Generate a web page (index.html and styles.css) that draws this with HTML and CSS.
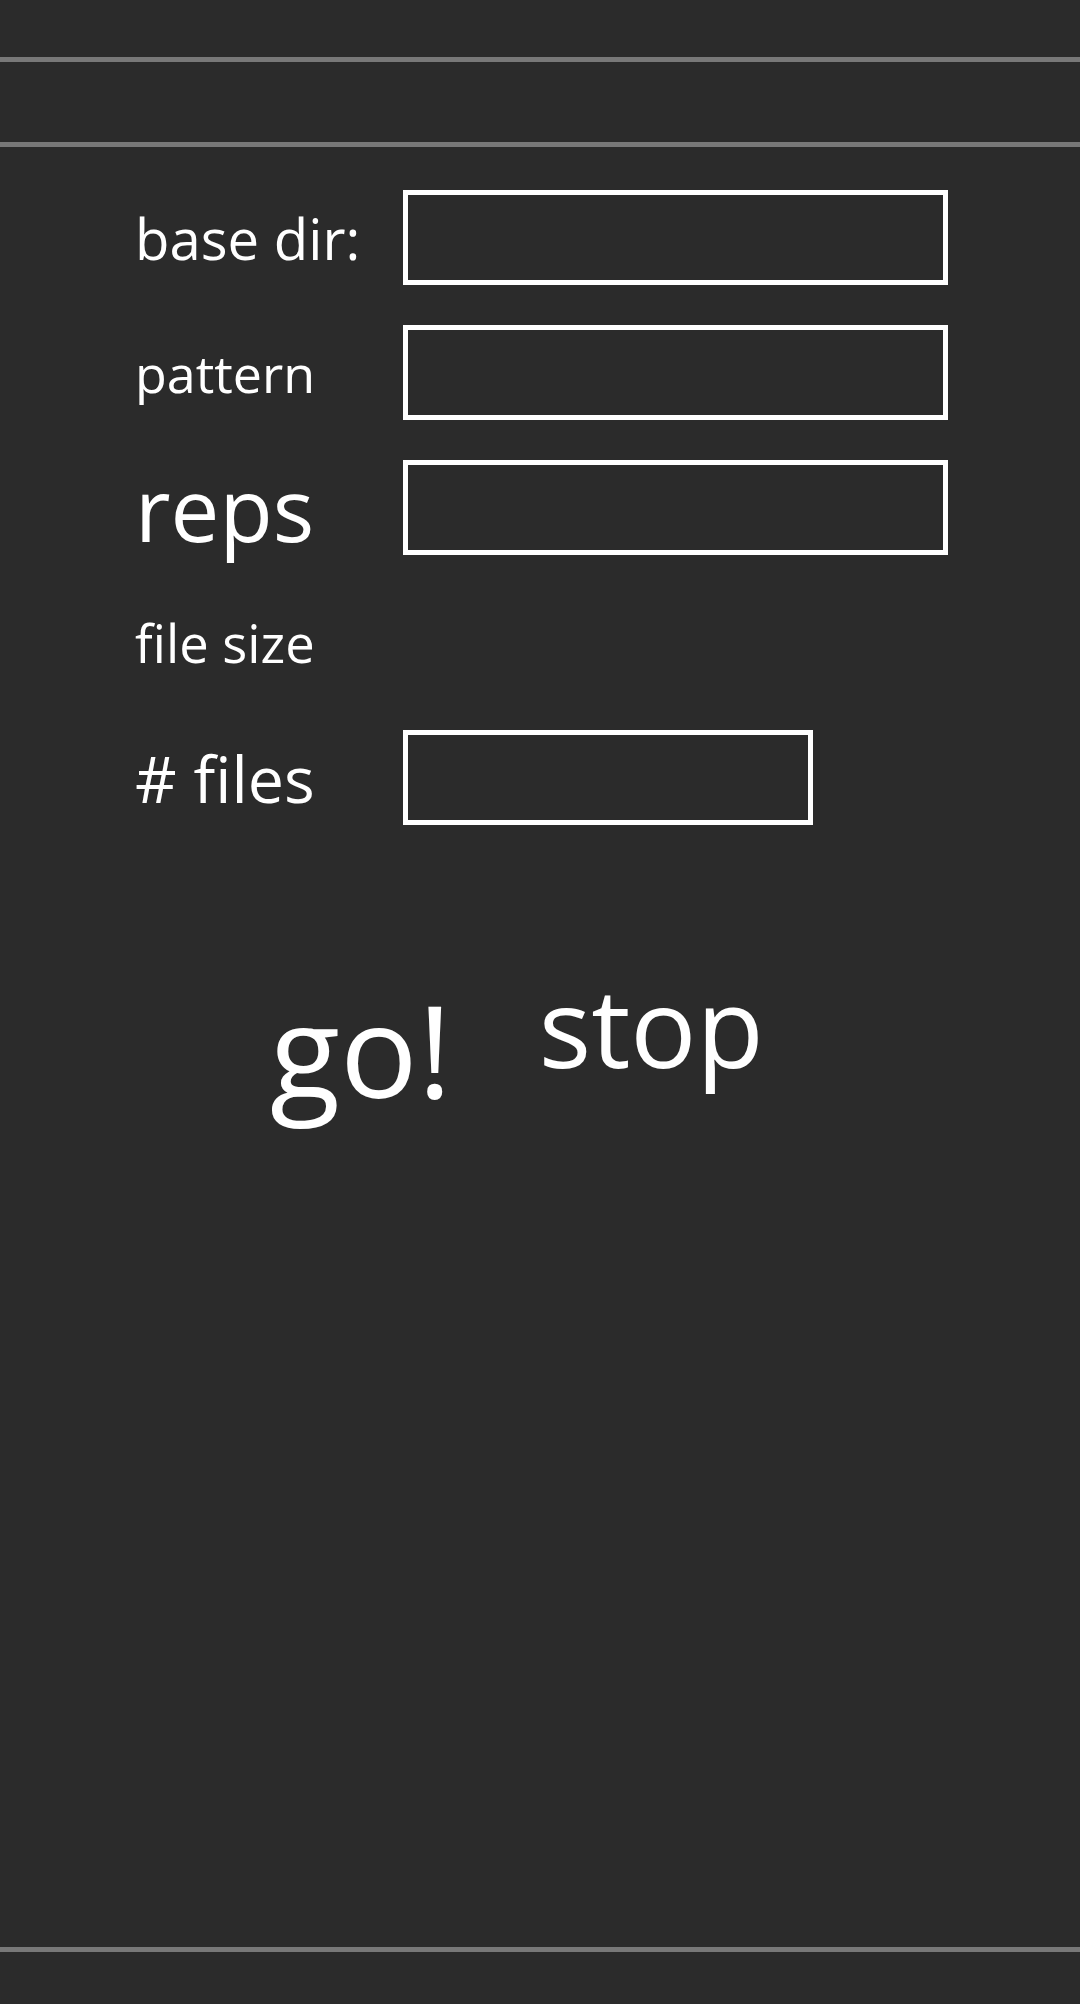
FILE: index.html
```html
<!DOCTYPE html>
<html>
<head>
<meta charset="utf-8">
<link rel="stylesheet" href="styles.css">
</head>
<body>
<div class="app">
  <div class="statusbar"></div>
  <div class="rule"></div>
  <div class="toolbar"></div>
  <div class="rule"></div>
  <main class="content">
    <div class="form">
      <div class="row">
        <label class="lbl lbl-base">base dir:</label>
        <input class="field field-wide" type="text">
      </div>
      <div class="row">
        <label class="lbl lbl-pattern">pattern</label>
        <input class="field field-wide" type="text">
      </div>
      <div class="row">
        <label class="lbl lbl-reps">reps</label>
        <input class="field field-wide" type="text">
      </div>
      <div class="row">
        <label class="lbl lbl-size">file size</label>
      </div>
      <div class="row">
        <label class="lbl lbl-files"># files</label>
        <input class="field field-narrow" type="text">
      </div>
    </div>
    <div class="actions">
      <button class="btn btn-go">go!</button>
      <button class="btn btn-stop">stop</button>
    </div>
  </main>
  <div class="rule"></div>
  <div class="navbar"></div>
</div>
</body>
</html>
```
FILE: styles.css
```css
html, body {
  margin: 0;
  padding: 0;
  background: #2b2b2b;
}
.app {
  width: 1080px;
  height: 2004px;
  display: flex;
  flex-direction: column;
  font-family: "Open Sans", "DejaVu Sans", sans-serif;
  color: #ffffff;
}
.statusbar { height: 57px; }
.toolbar { height: 80px; }
.navbar { height: 52px; }
.rule {
  height: 5px;
  background: #787878;
}
.content {
  flex: 1;
  display: flex;
  flex-direction: column;
  padding-top: 43px;
}
.form {
  display: flex;
  flex-direction: column;
  gap: 40px;
  padding-left: 135px;
}
.row {
  height: 95px;
  display: flex;
  align-items: center;
}
.lbl {
  width: 268px;
  flex: none;
  line-height: normal;
  white-space: nowrap;
}
.lbl-base { font-size: 56.3px; }
.lbl-pattern { font-size: 52px; }
.lbl-reps { font-size: 87px; }
.lbl-size { font-size: 52.5px; }
.lbl-files { font-size: 64.5px; }
.field {
  box-sizing: border-box;
  height: 95px;
  border: 5px solid #ffffff;
  border-radius: 0;
  background: transparent;
  padding: 0;
  margin: 0;
  outline: none;
  color: #fff;
  font: inherit;
}
.field-wide { width: 545px; }
.field-narrow { width: 410px; }
.actions {
  display: flex;
  align-items: flex-start;
  margin-top: 125px;
  padding-left: 270px;
  gap: 87px;
}
.btn {
  background: none;
  border: 0;
  padding: 0;
  margin: 0;
  color: #fff;
  font-family: "Open Sans", "DejaVu Sans", sans-serif;
  line-height: normal;
}
.btn-go { font-size: 129px; margin-top: 10px; }
.btn-stop { font-size: 110px; }
```
